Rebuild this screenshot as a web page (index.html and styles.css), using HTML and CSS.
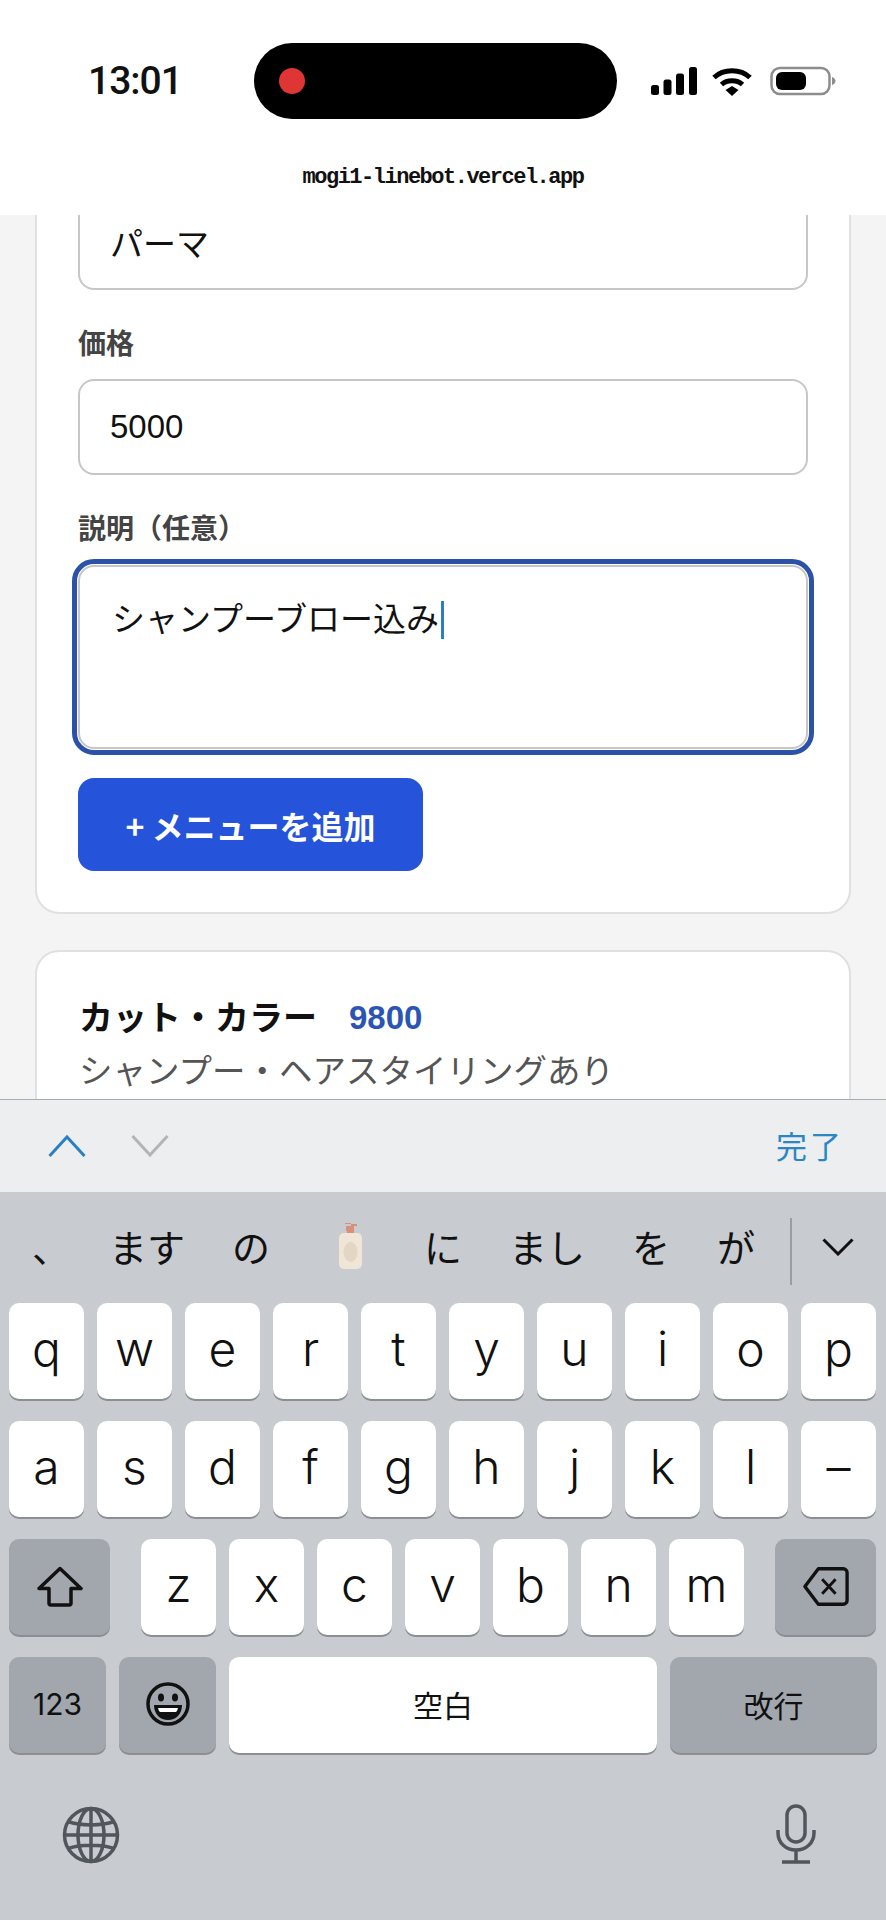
FILE: index.html
```html
<!DOCTYPE html>
<html lang="ja">
<head>
    <meta charset="UTF-8">
    <meta name="viewport" content="width=device-width, initial-scale=1.0">
    <title>メニュー管理</title>
    <link rel="stylesheet" href="styles.css">
</head>
<body>
    <header class="top-bar">
        <div class="status-row">
            <span class="time">13:01</span>
            <div class="island"><span class="rec-dot"></span></div>
            <svg class="signal" width="46" height="28" viewBox="0 0 46 28">
                <rect x="0" y="18" width="8" height="10" rx="2.5"/>
                <rect x="12.5" y="12.5" width="8" height="15.5" rx="2.5"/>
                <rect x="25" y="6.5" width="8" height="21.5" rx="2.5"/>
                <rect x="38" y="0" width="8" height="28" rx="2.5"/>
            </svg>
            <svg class="wifi" width="40" height="30" viewBox="0 0 40 30">
                <path d="M2 11.5C11.5 2.5 28.5 2.5 38 11.5" fill="none" stroke="#000" stroke-width="5"/>
                <path d="M9.5 18.5C15 13.5 25 13.5 30.5 18.5" fill="none" stroke="#000" stroke-width="5"/>
                <path d="M13.5 24L20 20L26.5 24L20 30Z" fill="#000"/>
            </svg>
            <svg class="battery" width="66" height="30" viewBox="0 0 66 30">
                <rect x="1.5" y="2" width="58" height="26" rx="8.5" fill="none" stroke="#8d8d8d" stroke-width="2.5"/>
                <rect x="6" y="6" width="30" height="18" rx="6" fill="#000"/>
                <path d="M62 11C64.500 12 65.500 13.500 65.500 15C65.500 16.500 64.500 18 62 19Z" fill="#8d8d8d"/>
            </svg>
        </div>
        <div class="url">mogi1-linebot.vercel.app</div>
    </header>

    <main class="scroll-view">
        <div class="scroll-content">
            <section class="card form-card">
                <div class="field single"><span class="value">パーマ</span></div>

                <div class="label">価格</div>
                <div class="field single"><span class="value">5000</span></div>

                <div class="label">説明（任意）</div>
                <div class="field multi is-focused">
                    <span class="value">シャンプーブロー込み</span><span class="caret"></span>
                </div>

                <button class="add-btn">+ メニューを追加</button>
            </section>

            <section class="card menu-card">
                <div class="menu-head">
                    <span class="menu-name">カット・カラー</span>
                    <span class="menu-price">9800</span>
                </div>
                <div class="menu-desc">シャンプー・ヘアスタイリングあり</div>
            </section>
        </div>
    </main>

    <div class="form-toolbar">
        <svg width="38" height="22" viewBox="0 0 38 22"><path d="M1.500 21L19 2L36.500 21" fill="none" stroke="#2a80c2" stroke-width="3"/></svg>
        <svg class="next" width="38" height="22" viewBox="0 0 38 22"><path d="M1.500 1L19 20L36.500 1" fill="none" stroke="#b2b4b7" stroke-width="3"/></svg>
        <span class="done">完了</span>
    </div>

    <div class="keyboard">
        <div class="candidates">
            <div class="candidate-list">
                <span class="comma">、</span>
                <span>ます</span>
                <span>の</span>
                <svg class="bottle" width="60" height="46" viewBox="0 0 60 46">
                    <path d="M29 8V3H40V1H28V0H34V8Z" fill="#d98f7c"/>
                    <rect x="30" y="3" width="7" height="8" fill="#d98f7c"/>
                    <rect x="22" y="10" width="23" height="36" rx="5" fill="#efe6d8"/>
                    <ellipse cx="33.500" cy="29" rx="7" ry="10" fill="#e3d6c2"/>
                </svg>
                <span>に</span>
                <span>まし</span>
                <span>を</span>
                <span>が</span>
            </div>
            <span class="divider"></span>
            <svg class="more" width="32" height="18" viewBox="0 0 32 18"><path d="M1.500 1.500L16 16L30.500 1.500" fill="none" stroke="#111" stroke-width="3"/></svg>
        </div>

        <div class="key-row">
            <span class="key">q</span><span class="key">w</span><span class="key">e</span><span class="key">r</span><span class="key">t</span>
            <span class="key">y</span><span class="key">u</span><span class="key">i</span><span class="key">o</span><span class="key">p</span>
        </div>
        <div class="key-row">
            <span class="key">a</span><span class="key">s</span><span class="key">d</span><span class="key">f</span><span class="key">g</span>
            <span class="key">h</span><span class="key">j</span><span class="key">k</span><span class="key">l</span><span class="key">–</span>
        </div>
        <div class="key-row">
            <span class="key fn shift">
                <svg width="46" height="41" viewBox="0 0 46 41"><path d="M23 2.500L44 22.500H34V37A2 2 0 0 1 32 39H14A2 2 0 0 1 12 37V22.500H2Z" fill="none" stroke="#111" stroke-width="3.500" stroke-linejoin="round"/></svg>
            </span>
            <span class="key letter-gap">z</span><span class="key">x</span><span class="key">c</span><span class="key">v</span><span class="key">b</span><span class="key">n</span><span class="key">m</span>
            <span class="key fn shift letter-gap">
                <svg width="46" height="41" viewBox="0 0 48 41"><path d="M16 2H42A4 4 0 0 1 46 6V35A4 4 0 0 1 42 39H16L2 20.500Z" fill="none" stroke="#111" stroke-width="3.500" stroke-linejoin="round"/><path d="M20 13L34 28M34 13L20 28" fill="none" stroke="#111" stroke-width="3"/></svg>
            </span>
        </div>
        <div class="key-row">
            <span class="key fn mode small-text">123</span>
            <span class="key fn mode">
                <svg width="44" height="44" viewBox="0 0 44 44">
                    <circle cx="22" cy="22" r="20" fill="none" stroke="#111" stroke-width="3.500"/>
                    <ellipse cx="15" cy="15.500" rx="3" ry="4" fill="#111"/>
                    <ellipse cx="29" cy="15.500" rx="3" ry="4" fill="#111"/>
                    <path d="M8 23H36C36 32 30 38 22 38C14 38 8 32 8 23Z" fill="#111"/>
                    <path d="M12 26H32C31.500 28 31 29 30 30H14C13 29 12.500 28 12 26Z" fill="#fff"/>
                </svg>
            </span>
            <span class="key space small-text">空白</span>
            <span class="key fn return small-text">改行</span>
        </div>

        <div class="keyboard-foot">
            <svg width="58" height="58" viewBox="0 0 58 58" fill="none" stroke="#50565c" stroke-width="3.500">
                <circle cx="29" cy="29" r="26.500"/>
                <ellipse cx="29" cy="29" rx="13" ry="26.500"/>
                <path d="M29 2.500V55.500M2.500 29H55.500M6 15.500C18 20 40 20 52 15.500M6 42.500C18 38 40 38 52 42.500"/>
            </svg>
            <svg width="40" height="60" viewBox="0 0 40 60" fill="none" stroke="#50565c" stroke-width="3.500">
                <rect x="11" y="2" width="18" height="36" rx="9"/>
                <path d="M2 26V29C2 39 10 46 20 46C30 46 38 39 38 29V26M20 46V58M6 58H34"/>
            </svg>
        </div>
    </div>
</body>
</html>
```

FILE: styles.css
```css
* {
    box-sizing: border-box;
}

body {
    font-family: 'Liberation Sans', 'Noto Sans CJK JP', sans-serif;
    margin: 0;
    height: 1920px;
    overflow: hidden;
    display: flex;
    flex-direction: column;
    background: #f4f4f5;
    color: #111;
}

/* status bar + address line */
.top-bar {
    height: 215px;
    flex: none;
    background: #fff;
    padding-top: 43px;
    position: relative;
    z-index: 1;
}

.status-row {
    display: flex;
    align-items: center;
    height: 76px;
    padding-left: 88px;
}

.time {
    width: 166px;
    font-family: 'Roboto', sans-serif;
    font-size: 39px;
    font-weight: 500;
    letter-spacing: -1px;
}

.island {
    width: 363px;
    height: 76px;
    background: #000;
    border-radius: 38px;
    display: flex;
    align-items: center;
    padding-left: 25px;
}

.rec-dot {
    width: 26px;
    height: 26px;
    background: #e03535;
    border-radius: 50%;
}

.signal {
    margin-left: 34px;
}

.wifi {
    margin-left: 15px;
}

.battery {
    margin-left: 18px;
}

.url {
    margin-top: 47px;
    text-align: center;
    font-family: 'Liberation Mono', monospace;
    font-size: 22px;
    letter-spacing: -1.500px;
    line-height: 24px;
    font-weight: 700;
}

/* page under the keyboard */
.scroll-view {
    height: 884px;
    flex: none;
    overflow: hidden;
}

.scroll-content {
    margin-top: -60px;
    padding: 0 35px;
}

.card {
    background: #fff;
    border: 2px solid #dfe0e2;
    border-radius: 24px;
}

.form-card {
    height: 759px;
    padding: 37px 41px 0;
}

.field {
    background: #fff;
    border: 2px solid #c6c7c9;
    border-radius: 16px;
    padding-left: 30px;
    width: 730px;
}

.single {
    height: 96px;
    display: flex;
    align-items: center;
    font-size: 33px;
}

.label {
    margin: 37px 0 16px;
    height: 36px;
    line-height: 36px;
    font-size: 28px;
    font-weight: 700;
    color: #444;
}

.multi {
    height: 184px;
    margin-top: 17px;
    padding: 34px 0 0 32px;
    font-size: 33px;
    line-height: 38px;
    display: flex;
    align-items: flex-start;
}

.is-focused {
    outline: 5px solid #2b52a8;
    outline-offset: 1px;
}

.caret {
    width: 3px;
    height: 38px;
    background: #2a7fc0;
    margin-left: 2px;
}

.add-btn {
    display: block;
    width: 345px;
    height: 93px;
    margin-top: 29px;
    background: #2553da;
    color: #fff;
    border: 0;
    border-radius: 16px;
    font-family: 'Noto Sans CJK JP', sans-serif;
    font-size: 32px;
    font-weight: 700;
}

.menu-card {
    margin-top: 36px;
    height: 300px;
    padding: 44px 42px;
}

.menu-head {
    display: flex;
    gap: 32px;
    font-size: 34px;
    font-weight: 700;
    line-height: 44px;
}

.menu-price {
    font-size: 33px;
    color: #2b55b5;
}

.menu-desc {
    margin-top: 10px;
    font-size: 33.500px;
    line-height: 44px;
    color: #555;
}

/* bar above the keyboard */
.form-toolbar {
    height: 93px;
    flex: none;
    display: flex;
    align-items: center;
    padding: 0 42px 0 48px;
    gap: 45px;
    background: #eceef0;
    border-top: 1px solid #a9abad;
}

.done {
    margin-left: auto;
    margin-bottom: 4px;
    font-size: 31px;
    letter-spacing: 3px;
    color: #2a86c4;
}

.keyboard {
    flex: 1;
    background: #c8cbd0;
    padding: 0 9px;
}

.candidates {
    height: 111px;
    display: flex;
    align-items: center;
    margin: 0 -9px;
    font-size: 38px;
    padding: 0 0 4px 32px;
}

.candidate-list {
    display: flex;
    align-items: center;
    gap: 47px;
}

.comma {
    margin-right: -8px;
}

.divider {
    width: 2px;
    height: 67px;
    margin: 12px 30px 0 35px;
    background: #9a9ea4;
}

.more {
    margin-top: 3px;
}

.key-row {
    display: flex;
    gap: 13px;
    height: 96px;
    margin-bottom: 22px;
}

.key {
    width: 75px;
    height: 96px;
    background: #fff;
    border-radius: 10px;
    box-shadow: 0 2px 0 #8b8f95;
    display: flex;
    align-items: center;
    justify-content: center;
    padding-bottom: 5px;
    font-family: 'Inter', 'Noto Sans CJK JP', sans-serif;
    font-size: 48px;
    font-weight: 300;
    color: #111;
}

.fn {
    background: #a2a7ae;
}

.shift {
    width: 101px;
    padding-bottom: 2px;
}

.letter-gap {
    margin-left: 18px;
}

.mode {
    width: 97px;
    padding-bottom: 2px;
}

.space {
    width: 428px;
}

.return {
    width: 207px;
}

.small-text {
    font-size: 30px;
    font-weight: 400;
    padding-bottom: 2px;
}

.keyboard-foot {
    display: flex;
    justify-content: space-between;
    align-items: flex-end;
    margin-top: 51px;
    padding: 0 61px 0 53px;
}
```
